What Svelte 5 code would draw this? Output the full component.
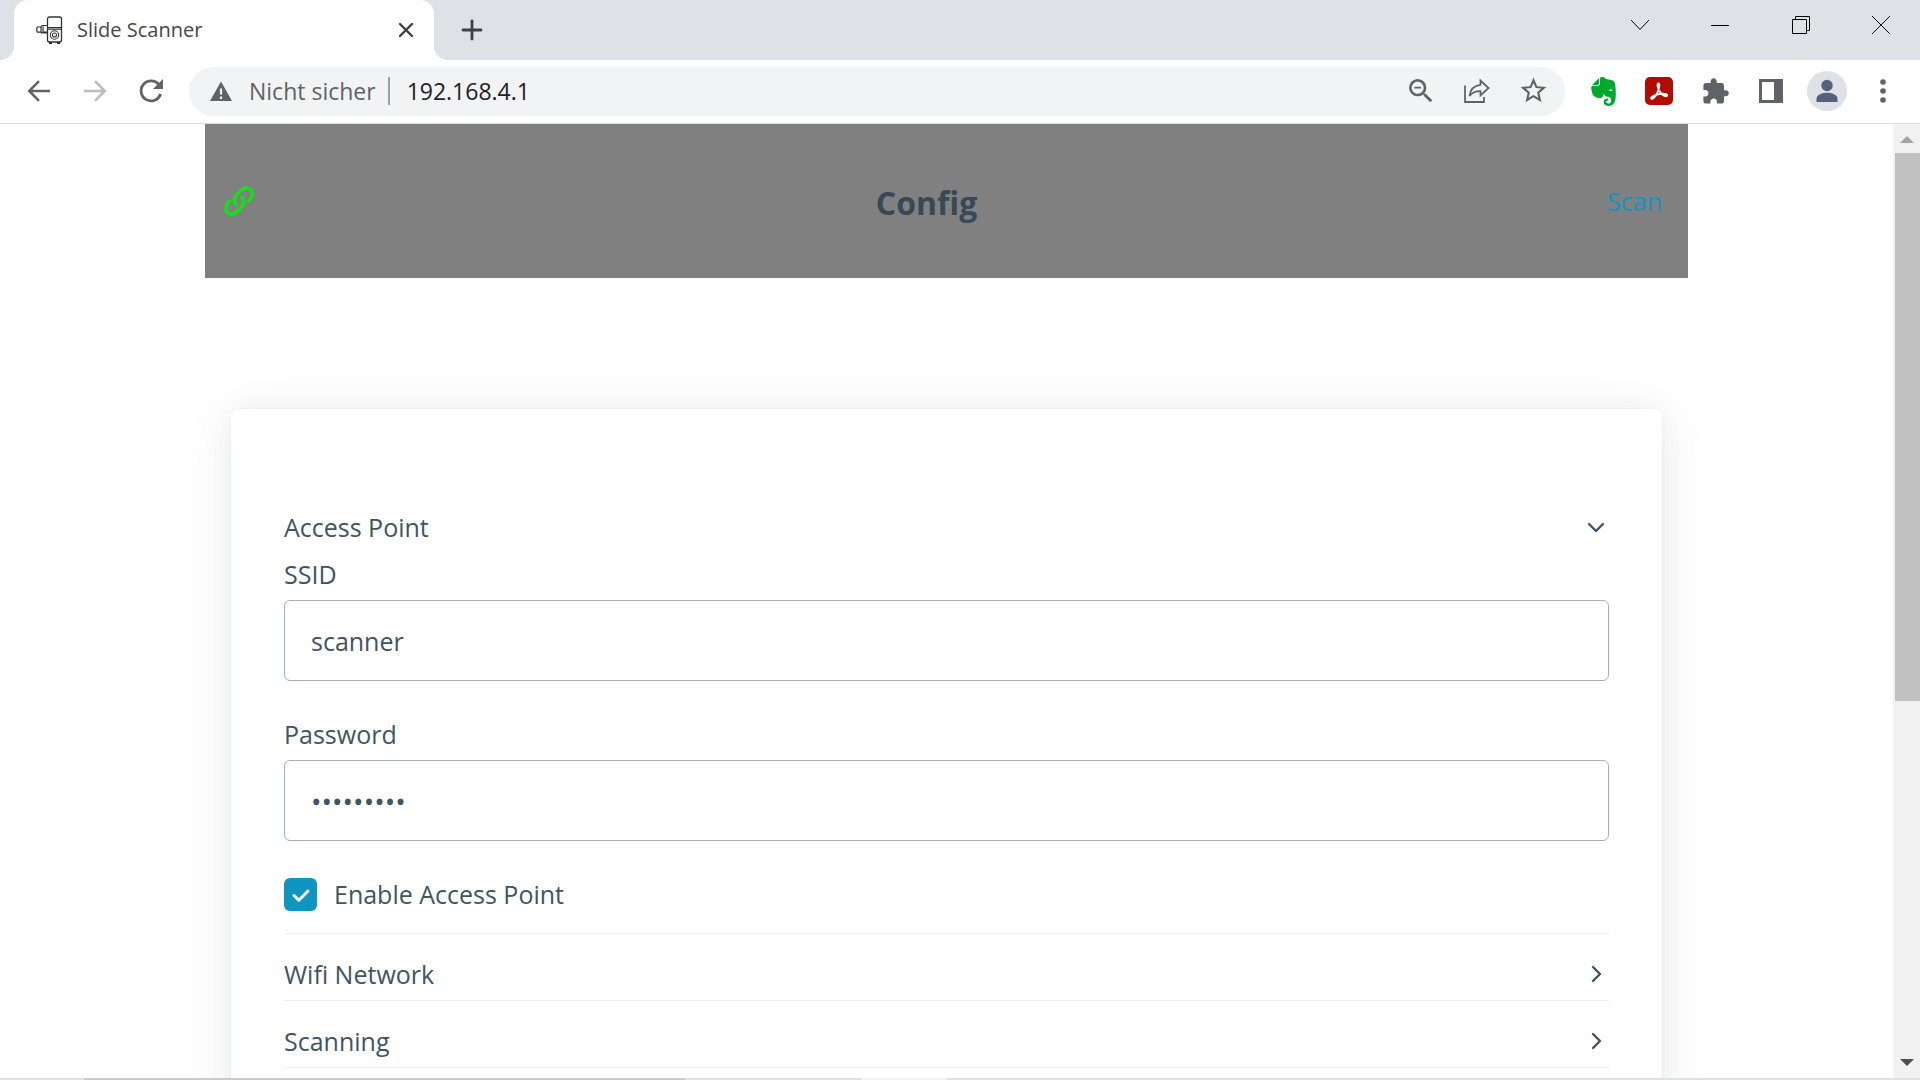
<script>
  let url = $state('192.168.4.1');
  let ssid = $state('scanner');
  let password = $state('scanner42');
  let enabled = $state(true);
</script>

{#snippet chevron()}
  <svg class="chevron" viewBox="0 0 26 26" aria-hidden="true"><path d="M6 10L13 17L20 10" /></svg>
{/snippet}

<div class="browser">
  <header class="tabstrip">
    <div class="tab">
      <svg class="favicon" viewBox="0 0 28 28" aria-hidden="true">
        <rect x="11.500" y="1" width="14" height="25" rx="2" fill="#fff" stroke="#303236" stroke-width="1.300" />
        <path d="M11.500 11.500h14M11.500 13.200h14" stroke="#303236" stroke-width="1.200" />
        <path d="M11.500 9.500H6l-1 1.500H1.500L.8 12v3l.7 1.200H5l1 .8h5.500M5 11v5.200M7 10.500v5.500h4" fill="none" stroke="#303236" stroke-width="1.200" />
        <circle cx="18.500" cy="19" r="4.200" fill="none" stroke="#303236" stroke-width="1.100" />
        <circle cx="18.500" cy="19" r="2" fill="none" stroke="#303236" stroke-width="1.100" />
        <path d="M13 27h3M21 27h3" stroke="#303236" stroke-width="1.800" />
      </svg>
      <span class="tab-title">Slide Scanner</span>
      <button class="tab-close" aria-label="Tab schließen">
        <svg width="16" height="16" viewBox="0 0 16 16"><path d="M2 2l12 12M14 2L2 14" stroke="#3c4043" stroke-width="2.400" stroke-linecap="round" /></svg>
      </button>
    </div>
    <button class="new-tab" aria-label="Neuer Tab">
      <svg width="22" height="22" viewBox="0 0 22 22"><path d="M11 2v18M2 11h18" stroke="#3c4043" stroke-width="2.800" stroke-linecap="round" /></svg>
    </button>
    <div class="window-controls">
      <button aria-label="Tabs durchsuchen"><svg width="20" height="20" viewBox="0 0 20 20"><path d="M1 5l9 9.500L19 5" /></svg></button>
      <button aria-label="Minimieren"><svg width="20" height="20" viewBox="0 0 20 20"><path d="M1 10.500h18" /></svg></button>
      <button aria-label="Verkleinern"><svg width="20" height="20" viewBox="0 0 20 20"><path d="M2.500 4.500h14v14h-14zM5.500 4.500v-3h14v14h-3" /></svg></button>
      <button aria-label="Schließen"><svg width="20" height="20" viewBox="0 0 20 20"><path d="M2 1l18 18M20 1L2 19" /></svg></button>
    </div>
  </header>

  <div class="toolbar">
    <nav class="group" aria-label="Navigation">
      <button class="icon" aria-label="Zurück">
        <svg width="24" height="24" viewBox="0 0 24 24"><path d="M23 12H2.500M12 2.200L2.200 12L12 21.800" fill="none" stroke="#5f6368" stroke-width="2.500" /></svg>
      </button>
      <button class="icon" aria-label="Vorwärts">
        <svg width="24" height="24" viewBox="0 0 24 24"><path d="M1 12h20.500M12 2.200L21.800 12L12 21.800" fill="none" stroke="#babcbe" stroke-width="2.500" /></svg>
      </button>
      <button class="icon" aria-label="Neu laden">
        <svg width="26" height="26" viewBox="0 0 26 26"><path d="M20.800 6.500A10 10 0 1 0 22.600 16" fill="none" stroke="#5f6368" stroke-width="2.800" /><path d="M25 1v10H15z" fill="#5f6368" /></svg>
      </button>
    </nav>

    <div class="omnibox">
      <svg class="warning" viewBox="0 0 32 32" aria-hidden="true"><path d="M5 26L16 6.500L27 26z" fill="#5f6368" /><path d="M16 13.500v6M16 21.500v2.500" stroke="#f1f3f4" stroke-width="2.200" /></svg>
      <span class="insecure">Nicht sicher</span>
      <span class="divider"></span>
      <input class="address" aria-label="Adresse" bind:value={url} />
      <div class="group">
        <button class="icon" aria-label="Zoom">
          <svg width="32" height="32" viewBox="0 0 24 24" fill="#5f6368"><path d="M15.500 14h-.79l-.28-.27A6.471 6.471 0 0 0 16 9.500 6.500 6.500 0 1 0 9.500 16c1.610 0 3.090-.59 4.230-1.570l.27.28v.79l5 4.990L20.490 19l-4.990-5zm-6 0C7.010 14 5 11.990 5 9.500S7.010 5 9.500 5 14 7.010 14 9.500 11.990 14 9.500 14zM7 8.800h5v1.300H7z" /></svg>
        </button>
        <button class="icon" aria-label="Teilen">
          <svg width="28" height="28" viewBox="0 0 28 28" fill="none" stroke="#5f6368" stroke-width="1.800"><path d="M2 8.500V25h19v-5" /><path d="M17.500 3.500L25.500 11l-8 7.500v-4.300c-5 0-8.500 1.300-11 4.800C7.200 13 10.500 8.500 17.500 7.800z" /></svg>
        </button>
        <button class="icon" aria-label="Lesezeichen">
          <svg width="31" height="31" viewBox="0 0 24 24" fill="#5f6368"><path d="M22 9.240l-7.190-.62L12 2 9.190 8.630 2 9.240l5.460 4.730L5.820 21 12 17.270 18.180 21l-1.630-7.030L22 9.240zM12 15.400l-3.760 2.270 1-4.280-3.320-2.880 4.380-.38L12 6.100l1.710 4.040 4.380.38-3.320 2.880 1 4.280L12 15.400z" /></svg>
        </button>
      </div>
    </div>

    <div class="group">
      <button class="icon" aria-label="Evernote">
        <svg width="29" height="29" viewBox="0 0 24 24" fill="#00a82d"><path d="M8.222 5.393c0 .239-.02.637-.256.895-.257.24-.652.259-.888.259H4.552c-.73 0-1.165 0-1.460.04-.159.02-.356.1-.455.14-.04.019-.04 0-.02-.02L8.380.796c.02-.02.04-.02.02.02-.04.099-.118.298-.138.457-.04.298-.04.736-.04 1.472v2.647zm5.348 17.869c-.67-.438-1.026-1.015-1.164-1.373a2.924 2.924 0 0 1-.217-1.095 3.007 3.007 0 0 1 3-3.004c.493 0 .888.398.888.895a.88.88 0 0 1-.454.776c-.099.06-.237.1-.336.12-.098.02-.473.06-.65.218-.198.16-.356.418-.356.697 0 .298.118.577.316.776.355.358.829.557 1.342.557a2.436 2.436 0 0 0 2.427-2.447c0-1.214-.809-2.290-1.875-2.766-.158-.08-.414-.14-.651-.2a8.040 8.040 0 0 0-.592-.1c-.829-.1-2.901-.755-3.040-2.605 0 0-.611 2.785-1.835 3.540-.118.06-.276.12-.454.16-.177.04-.374.06-.434.06-1.993.12-4.105-.517-5.565-2.030 0 0-.987-.815-1.500-3.103-.118-.558-.355-1.553-.493-2.488-.06-.338-.08-.597-.099-.836 0-.975.592-1.631 1.342-1.730h4.026c.69 0 1.086-.18 1.342-.42.336-.317.415-.775.415-1.312V1.354C9.050.617 9.703 0 10.669 0h.474c.197 0 .434.02.651.04.158.02.296.06.533.12 1.204.298 1.460 1.532 1.460 1.532s2.270.398 3.415.597c1.085.199 3.770.378 4.282 3.104 1.204 6.487.474 12.775.415 12.775-.849 6.129-5.901 5.830-5.901 5.830a4.100 4.100 0 0 1-2.428-.736zm4.540-13.034c-.652-.06-1.204.2-1.402.697-.04.1-.079.219-.059.278.02.06.06.08.099.1.237.12.631.179 1.204.239.572.06.967.1 1.223.06.04 0 .08-.02.119-.08.04-.06.02-.18.02-.28-.06-.536-.553-.934-1.204-1.014z" /></svg>
      </button>
      <button class="icon" aria-label="Adobe Acrobat">
        <svg width="30" height="30" viewBox="0 0 30 30"><rect x="1" y="1" width="28" height="28" rx="5" fill="#b30b00" /><path d="M14.500 7.500c-1.800 0-.8 4.500 1 7.500 1.700 2.800 4.700 5.400 6.800 5.200 1.900-.3.800-2.400-2.800-2.400-3.600-.1-7.500.8-10.400 2.200-2.300 1.200-2.500 3.100-1 2.900 2-.5 4.900-4.900 6.100-8.200 1-2.900 1.700-7.200.3-7.200z" fill="none" stroke="#fff" stroke-width="1.900" /></svg>
      </button>
      <button class="icon" aria-label="Erweiterungen">
        <svg width="29" height="29" viewBox="0 0 24 24" fill="#5f6368"><path d="M20.500 11H19V7c0-1.100-.9-2-2-2h-4V3.500C13 2.120 11.880 1 10.500 1S8 2.120 8 3.500V5H4c-1.100 0-1.990.9-1.990 2v3.800H3.500c1.490 0 2.700 1.210 2.700 2.700s-1.210 2.700-2.700 2.700H2V20c0 1.100.9 2 2 2h3.800v-1.500c0-1.490 1.210-2.700 2.700-2.700 1.490 0 2.700 1.210 2.700 2.700V22H17c1.100 0 2-.9 2-2v-4h1.500c1.380 0 2.500-1.120 2.500-2.500S21.880 11 20.500 11z" /></svg>
      </button>
      <button class="icon" aria-label="Seitenleiste">
        <svg width="26" height="26" viewBox="0 0 26 26"><path fill-rule="evenodd" d="M1 1h24v24H1zM4 4v18h12V4z" fill="#5f6368" /></svg>
      </button>
      <button class="icon avatar" aria-label="Profil">
        <svg width="40" height="40" viewBox="0 0 40 40" fill="#56607a"><circle cx="20" cy="14.500" r="5.700" /><path d="M9.500 31v-3.500c0-4 6-5.800 10.500-5.800s10.500 1.800 10.500 5.800V31z" /></svg>
      </button>
      <button class="icon" aria-label="Menü">
        <svg width="26" height="26" viewBox="0 0 26 26" fill="#5f6368"><circle cx="13" cy="4" r="2.800" /><circle cx="13" cy="13" r="2.800" /><circle cx="13" cy="22" r="2.800" /></svg>
      </button>
    </div>
  </div>

  <div class="viewport">
    <div class="page">
      <header class="page-header">
        <svg class="link-icon" viewBox="0 0 30 30" role="img" aria-label="Verbunden">
          <path d="M6.300 13.800C.5 19 1 24.500 3.700 26.800c3.200 2.600 7.100 1 10.100-1.900l3-2.900c3.500-3.500 4.300-8.500-.2-11.200" />
          <path d="M23.700 16.200c5.800-5.200 5.300-10.700 2.600-13-3.200-2.600-7.100-1-10.100 1.900l-3 2.900c-3.500 3.500-4.300 8.500.2 11.200" />
        </svg>
        <h1>Config</h1>
        <a href="#scan">Scan</a>
      </header>

      <main class="card">
        <details open>
          <summary>Access Point {@render chevron()}</summary>
          <div class="fields">
            <label for="ssid">SSID</label>
            <input id="ssid" class="text" type="text" bind:value={ssid} />
            <label for="password">Password</label>
            <input id="password" class="text" type="password" bind:value={password} />
            <label class="check"><input type="checkbox" bind:checked={enabled} />Enable Access Point</label>
          </div>
        </details>
        <details>
          <summary>Wifi Network {@render chevron()}</summary>
        </details>
        <details>
          <summary>Scanning {@render chevron()}</summary>
        </details>
      </main>
    </div>

    <div class="scrollbar" aria-hidden="true">
      <svg width="14" height="29" viewBox="0 0 14 29"><path d="M0 19L7 12L14 19z" fill="#a3a3a3" /></svg>
      <div class="track"><div class="thumb"></div></div>
      <svg width="14" height="29" viewBox="0 0 14 29"><path d="M0 10h14L7 17z" fill="#505050" /></svg>
    </div>
  </div>
  <div class="edge"></div>
</div>

<style>
  :global(body) {
    margin: 0;
    background: #fff;
  }

  .browser,
  .browser * {
    box-sizing: border-box;
  }

  .browser {
    display: flex;
    flex-direction: column;
    height: 100vh;
    overflow: hidden;
    font-family: 'Open Sans', 'Noto Sans', sans-serif;
    color: #415462;
  }

  button {
    display: flex;
    align-items: center;
    justify-content: center;
    padding: 0;
    border: 0;
    background: none;
    flex: none;
  }

  input {
    font-family: inherit;
    color: inherit;
  }

  .tabstrip {
    display: flex;
    align-items: flex-start;
    flex: none;
    padding-left: 14px;
    background: #dee1e6;
  }

  .tab {
    position: relative;
    display: flex;
    align-items: center;
    width: 420px;
    height: 60px;
    padding: 0 16px 0 22px;
    background: #fff;
    border-radius: 14px 14px 0 0;
  }

  .tab::before,
  .tab::after {
    content: '';
    position: absolute;
    bottom: 0;
    width: 14px;
    height: 14px;
  }

  .tab::before {
    left: -14px;
    background: radial-gradient(circle at 0 0, #dee1e6 14px, #fff 14px);
  }

  .tab::after {
    right: -14px;
    background: radial-gradient(circle at 100% 0, #dee1e6 14px, #fff 14px);
  }

  .favicon {
    width: 28px;
    height: 28px;
    flex: none;
  }

  .tab-title {
    flex: 1;
    margin-left: 13px;
    font-size: 20px;
    line-height: 28px;
    color: #45474a;
  }

  .tab-close {
    width: 24px;
    height: 24px;
  }

  .new-tab {
    width: 40px;
    height: 60px;
    margin-left: 18px;
  }

  .window-controls {
    display: flex;
    margin-left: auto;
  }

  .window-controls button {
    width: 80px;
    height: 50px;
  }

  .window-controls path {
    fill: none;
    stroke: #000;
    stroke-width: 1;
  }

  .toolbar {
    display: flex;
    align-items: center;
    flex: none;
    gap: 18px;
    padding: 7px 17px 7px 19px;
    border-bottom: 1px solid #dadce0;
  }

  .group {
    display: flex;
    gap: 16px;
    flex: none;
    padding-bottom: 1px;
  }

  .icon {
    width: 40px;
    height: 40px;
  }

  .avatar {
    border-radius: 50%;
    background: #dee1e6;
  }

  .omnibox {
    display: flex;
    align-items: center;
    flex: 1;
    min-width: 0;
    height: 49px;
    padding: 0 12px 1px 16px;
    border-radius: 25px;
    background: #f1f3f4;
  }

  .warning {
    width: 32px;
    height: 32px;
    margin-right: 12px;
    flex: none;
  }

  .insecure {
    padding-bottom: 1px;
    font-size: 23px;
    line-height: 32px;
    white-space: nowrap;
    color: #5f6368;
  }

  .divider {
    width: 2px;
    height: 28px;
    margin: 0 17px 0 12px;
    background: #9aa0a6;
  }

  .address {
    flex: 1;
    min-width: 0;
    padding: 0 0 1px;
    border: 0;
    outline: 0;
    background: none;
    font-size: 23px;
    color: #202124;
  }

  .viewport {
    display: flex;
    flex: 1;
    min-height: 0;
  }

  .page {
    flex: 1;
    min-width: 0;
    overflow: hidden;
    font-size: 25px;
    line-height: 40px;
  }

  .page-header {
    display: flex;
    align-items: center;
    justify-content: space-between;
    max-width: 1483px;
    height: 154px;
    margin: 0 auto 131px;
    padding: 0 26px 0 19px;
    background: #808080;
  }

  .link-icon {
    width: 30px;
    height: 30px;
    fill: none;
    stroke: #00f000;
    stroke-width: 3;
  }

  h1 {
    margin: 0;
    padding: 4px 8px 0 0;
    font-size: 32px;
    line-height: 40px;
    font-weight: 700;
    color: #374956;
  }

  a {
    color: #1095c1;
    text-decoration: none;
  }

  .card {
    max-width: 1431px;
    margin: 0 auto;
    padding: 78px 53px;
    border-radius: 6px;
    background: #fff;
    box-shadow:
      0 3px 27px rgba(27, 40, 50, 0.04),
      0 3px 53px rgba(27, 40, 50, 0.08),
      0 0 0 1px rgba(27, 40, 50, 0.024);
  }

  details {
    border-bottom: 1px solid #edf0f3;
  }

  summary {
    display: flex;
    align-items: center;
    justify-content: space-between;
    padding: 20px 0 6px;
    list-style: none;
  }

  .chevron {
    width: 26px;
    height: 26px;
    fill: none;
    stroke: #415462;
    stroke-width: 2.400;
    stroke-linecap: round;
    stroke-linejoin: round;
    transform: rotate(-90deg);
  }

  details[open] .chevron {
    transform: none;
  }

  .fields {
    padding: 1px 0 19px;
  }

  label {
    display: block;
    margin-bottom: 6px;
  }

  .text {
    display: block;
    width: 100%;
    height: 81px;
    margin-bottom: 33px;
    padding: 0 26px;
    border: 1px solid #a2afb9;
    border-radius: 6px;
    outline: 0;
    background: #fff;
    font-size: 25px;
  }

  .text[type='password'] {
    font-size: 28px;
  }

  .check {
    display: flex;
    align-items: center;
    gap: 17px;
    margin: 0;
  }

  .check input {
    appearance: none;
    width: 33px;
    height: 33px;
    margin: 0;
    border: 2px solid #a2afb9;
    border-radius: 6px;
  }

  .check input:checked {
    border: 0;
    background: #1095c1
      url("data:image/svg+xml,%3Csvg xmlns='http://www.w3.org/2000/svg' viewBox='0 0 33 33' fill='none' stroke='white' stroke-width='3' stroke-linecap='round' stroke-linejoin='round'%3E%3Cpath d='M10 17.500L14.800 22.300L24 13'/%3E%3C/svg%3E")
      center / 33px 33px no-repeat;
  }

  .scrollbar {
    display: flex;
    flex-direction: column;
    align-items: center;
    flex: none;
    width: 27px;
    background: #f1f1f1;
  }

  .track {
    flex: 1;
    align-self: stretch;
    padding-left: 2px;
  }

  .thumb {
    height: 61.2%;
    background: #c1c1c1;
  }

  .edge {
    flex: none;
    height: 2px;
    background: linear-gradient(90deg, #e1e1e1 4.4%, #cbcbcb 4.4% 35.7%, #e1e1e1 35.7% 44.9%, #f3f3f3 44.9% 49.3%, #e1e1e1 49.3%);
  }
</style>
